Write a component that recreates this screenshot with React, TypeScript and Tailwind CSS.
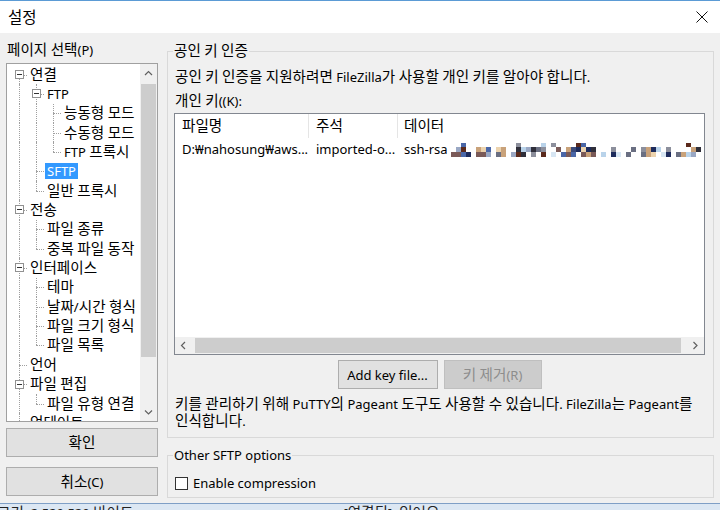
import React from "react";

type TNode = {
  label: string;
  level: number;
  guides: boolean[];
  kids?: boolean;
  last?: boolean;
  first?: boolean;
  sel?: boolean;
};

const TREE: TNode[] = [
  { label: "연결", level: 0, guides: [], kids: true, first: true },
  { label: "FTP", level: 1, guides: [true], kids: true },
  { label: "능동형 모드", level: 2, guides: [true, true] },
  { label: "수동형 모드", level: 2, guides: [true, true] },
  { label: "FTP 프록시", level: 2, guides: [true, true], last: true },
  { label: "SFTP", level: 1, guides: [true], sel: true },
  { label: "일반 프록시", level: 1, guides: [true], last: true },
  { label: "전송", level: 0, guides: [], kids: true },
  { label: "파일 종류", level: 1, guides: [true] },
  { label: "중복 파일 동작", level: 1, guides: [true], last: true },
  { label: "인터페이스", level: 0, guides: [], kids: true },
  { label: "테마", level: 1, guides: [true] },
  { label: "날짜/시간 형식", level: 1, guides: [true] },
  { label: "파일 크기 형식", level: 1, guides: [true] },
  { label: "파일 목록", level: 1, guides: [true], last: true },
  { label: "언어", level: 0, guides: [] },
  { label: "파일 편집", level: 0, guides: [], kids: true },
  { label: "파일 유형 연결", level: 1, guides: [true], last: true },
  { label: "업데이트", level: 0, guides: [] },
];

const BLOB = (() => {
  let s = 91;
  const r = () => {
    s = (s * 16807) % 2147483647;
    return s / 2147483647;
  };
  const pal = [
    "#1d2b5c",
    "#3b4a7a",
    "#6a6f82",
    "#8c8f9c",
    "#b9d3ea",
    "#d7e6f3",
    "#ecd3ae",
    "#c9a27a",
    "#5b2a1c",
    "#2f2f3a",
    "#9aa8c4",
    "#4a67a8",
    "#7a5a58",
  ];
  const out: { x: number; y: number; w: number; h: number; c: string }[] = [];
  const gaps = new Set([4, 11, 19, 29, 37, 44]);
  for (let i = 0; i < 50; i++) {
    if (gaps.has(i)) continue;
    const x = i * 5;
    if (r() < 0.88) out.push({ x, y: 10, w: 5, h: 5, c: pal[Math.floor(r() * pal.length)] });
    if (r() < 0.6) out.push({ x, y: 5, w: 5, h: 5, c: pal[Math.floor(r() * pal.length)] });
    if (r() < 0.2) out.push({ x, y: 1, w: 5, h: 4, c: pal[Math.floor(r() * pal.length)] });
  }
  return out;
})();

// Hangul runs are rendered a little larger to match the Malgun Gothic widths of the reference
function T({ s }: { s: string }) {
  const parts = s.split(/([\uAC00-\uD7A3]+)/);
  return (
    <>
      {parts.map((p, i) =>
        /[\uAC00-\uD7A3]/.test(p) ? (
          <span key={i} className="text-[14.6px] leading-none">
            {p}
          </span>
        ) : (
          <React.Fragment key={i}>{p}</React.Fragment>
        )
      )}
    </>
  );
}

function TreeRow({ n }: { n: TNode }) {
  return (
    <div className="h-[19.35px] flex items-center">
      {n.guides.map((g, i) => (
        <div key={i} className="relative w-[17px] h-full shrink-0">
          {g && <div className="absolute left-[12px] top-0 bottom-0 border-l border-dotted border-[#a0a0a0]" />}
        </div>
      ))}
      <div className="relative w-[17px] h-full shrink-0">
        {n.first ? (
          <div className="absolute left-[12px] top-1/2 bottom-0 border-l border-dotted border-[#a0a0a0]" />
        ) : n.last ? (
          <div className="absolute left-[12px] top-0 h-1/2 border-l border-dotted border-[#a0a0a0]" />
        ) : (
          <div className="absolute left-[12px] top-0 bottom-0 border-l border-dotted border-[#a0a0a0]" />
        )}
        <div className="absolute left-[12px] top-1/2 w-[8px] border-t border-dotted border-[#a0a0a0]" />
        {n.kids && (
          <div className="absolute left-[8px] top-[5px] w-[9px] h-[9px] border border-[#919191] bg-white flex items-center justify-center">
            <div className="w-[5px] h-px bg-[#333]" />
          </div>
        )}
      </div>
      <span
        className={
          n.sel
            ? "ml-[4px] px-[2px] leading-[16px] whitespace-nowrap bg-[#3399ff] text-white"
            : "ml-[4px] px-[2px] leading-[16px] whitespace-nowrap"
        }
      >
        <T s={n.label} />
      </span>
    </div>
  );
}

function Chevron({ dir }: { dir: "up" | "down" | "left" | "right" }) {
  const d =
    dir === "up"
      ? "M1 5 L4.5 1.5 L8 5"
      : dir === "down"
      ? "M1 1.5 L4.5 5 L8 1.5"
      : dir === "left"
      ? "M5 1 L1.5 4.5 L5 8"
      : "M1.5 1 L5 4.5 L1.5 8";
  const w = dir === "up" || dir === "down" ? 9 : 7;
  const h = dir === "up" || dir === "down" ? 7 : 9;
  return (
    <svg width={w} height={h} viewBox={`0 0 ${w} ${h}`}>
      <path d={d} fill="none" stroke="#606060" strokeWidth="1.2" />
    </svg>
  );
}

export default function App() {
  return (
    <div className="w-[720px] h-[510px] overflow-hidden flex flex-col bg-white text-[13px] text-black font-['Noto_Sans','Noto_Sans_CJK_KR',sans-serif] border-t border-[#5b9bd5]">
      {/* title bar */}
      <div className="h-[32px] shrink-0 flex items-center justify-between pl-[8px] pr-[12px] bg-white">
        <span className="text-[15.5px] leading-[18px]">설정</span>
        <svg width="12" height="12" viewBox="0 0 12 12">
          <path d="M0.5 0.5 L11.5 11.5 M11.5 0.5 L0.5 11.5" stroke="#111" strokeWidth="1" />
        </svg>
      </div>

      {/* body */}
      <div className="h-[470px] shrink-0 bg-[#f0f0f0] flex gap-[9px] pl-[6px] pr-[6px]">
        {/* left column */}
        <div className="w-[152px] shrink-0 flex flex-col pt-[8px]">
          <div className="h-[18px] leading-[18px] pl-[1px] whitespace-nowrap">
            <T s="페이지 선택(P)" />
          </div>
          <div className="mt-[4px] h-[359px] border border-[#a0a0a0] bg-white flex">
            <div className="flex-1 overflow-hidden pt-[1px]">
              {TREE.map((n, i) => (
                <TreeRow key={i} n={n} />
              ))}
            </div>
            <div className="w-[17px] shrink-0 flex flex-col bg-[#f0f0f0]">
              <div className="h-[18px] flex items-center justify-center">
                <Chevron dir="up" />
              </div>
              <div className="flex-1 flex flex-col pt-[2px]">
                <div className="h-[273px] mx-[1px] bg-[#cdcdcd]" />
              </div>
              <div className="h-[18px] flex items-center justify-center">
                <Chevron dir="down" />
              </div>
            </div>
          </div>
          <button className="mt-[6px] h-[29px] w-full border border-[#adadad] bg-[#e1e1e1] leading-[18px]">
            <T s="확인" />
          </button>
          <button className="mt-[10px] h-[29px] w-full border border-[#adadad] bg-[#e1e1e1] leading-[18px]">
            <T s="취소(C)" />
          </button>
        </div>

        {/* right column */}
        <div className="flex-1 flex flex-col pt-[9px]">
          <fieldset className="border border-[#d9d9d9] pl-[6px] pr-[8px] pb-[7px]">
            <legend className="px-[1px] -ml-[1px] leading-[18px]">
              <T s="공인 키 인증" />
            </legend>
            <div className="mt-[8px] h-[18px] leading-[18px] pl-[1px] whitespace-nowrap">
              <T s="공인 키 인증을 지원하려면 FileZilla가 사용할 개인 키를 알아야 합니다." />
            </div>
            <div className="mt-[6px] h-[18px] leading-[18px] pl-[1px]">
              <T s="개인 키((K):" />
            </div>
            <div className="mt-[3px] h-[242px] border border-[#828790] bg-white flex flex-col">
              <div className="h-[24px] flex">
                <div className="w-[134px] border-r border-[#e5e5e5] pl-[7px] leading-[24px]">
                  <T s="파일명" />
                </div>
                <div className="w-[89px] border-r border-[#e5e5e5] pl-[7px] leading-[24px]">
                  <T s="주석" />
                </div>
                <div className="flex-1 pl-[6px] leading-[24px]">
                  <T s="데이터" />
                </div>
              </div>
              <div className="mt-[3px] h-[18px] flex items-center whitespace-nowrap">
                <div className="w-[134px] pl-[7px] overflow-hidden">D:₩nahosung₩aws...</div>
                <div className="w-[89px] pl-[7px] overflow-hidden">imported-o...</div>
                <div className="flex-1 pl-[6px] flex items-center overflow-hidden">
                  <span>ssh-rsa</span>
                  <svg width="252" height="16" viewBox="0 0 252 16" className="ml-[3px] shrink-0">
                    {BLOB.map((b, i) => (
                      <rect key={i} x={b.x} y={b.y} width={b.w} height={b.h} fill={b.c} />
                    ))}
                  </svg>
                </div>
              </div>
              <div className="flex-1" />
              <div className="h-[17px] flex bg-[#f0f0f0]">
                <div className="w-[17px] flex items-center justify-center">
                  <Chevron dir="left" />
                </div>
                <div className="flex-1 flex items-stretch py-[1px] pl-[3px] pr-[6px]">
                  <div className="flex-1 bg-[#cdcdcd]" />
                </div>
                <div className="w-[17px] flex items-center justify-center">
                  <Chevron dir="right" />
                </div>
              </div>
            </div>
            <div className="mt-[5px] flex justify-center gap-[6px]">
              <button className="h-[29px] w-[100px] border border-[#adadad] bg-[#e1e1e1] leading-[18px]">
                Add key file...
              </button>
              <button className="h-[29px] w-[98px] border border-[#bfbfbf] bg-[#cccccc] text-[#8d8d8d] leading-[18px]">
                <T s="키 제거(R)" />
              </button>
            </div>
            <div className="mt-[7px] leading-[17px] pl-[1px]">
              <div className="h-[17px] whitespace-nowrap">
                <T s="키를 관리하기 위해 PuTTY의 Pageant 도구도 사용할 수 있습니다. FileZilla는 Pageant를" />
              </div>
              <div className="h-[17px]">
                <T s="인식합니다." />
              </div>
            </div>
          </fieldset>

          <fieldset className="mt-[8px] border border-[#d9d9d9] pl-[6px] pr-[8px] pb-[5px]">
            <legend className="px-[1px] -ml-[1px] leading-[18px]">Other SFTP options</legend>
            <div className="mt-[10px] h-[18px] flex items-center pl-[1px]">
              <div className="w-[13px] h-[13px] border border-[#333] bg-white" />
              <span className="ml-[5px] leading-[18px]">Enable compression</span>
            </div>
          </fieldset>
        </div>
      </div>

      {/* window behind (status strip) */}
      <div className="h-[7px] shrink-0 overflow-hidden bg-[#dce7f3] border-t border-[#7f9fc6] flex text-[13px] leading-[16px] text-[#222]">
        <span className="-ml-[3px] pt-[1px] whitespace-nowrap">
          <T s="크기: 2,529,529 바이트" />
        </span>
        <span className="ml-[210px] pt-[1px] whitespace-nowrap">
          <T s="[연결된]: 있어요" />
        </span>
      </div>
    </div>
  );
}
